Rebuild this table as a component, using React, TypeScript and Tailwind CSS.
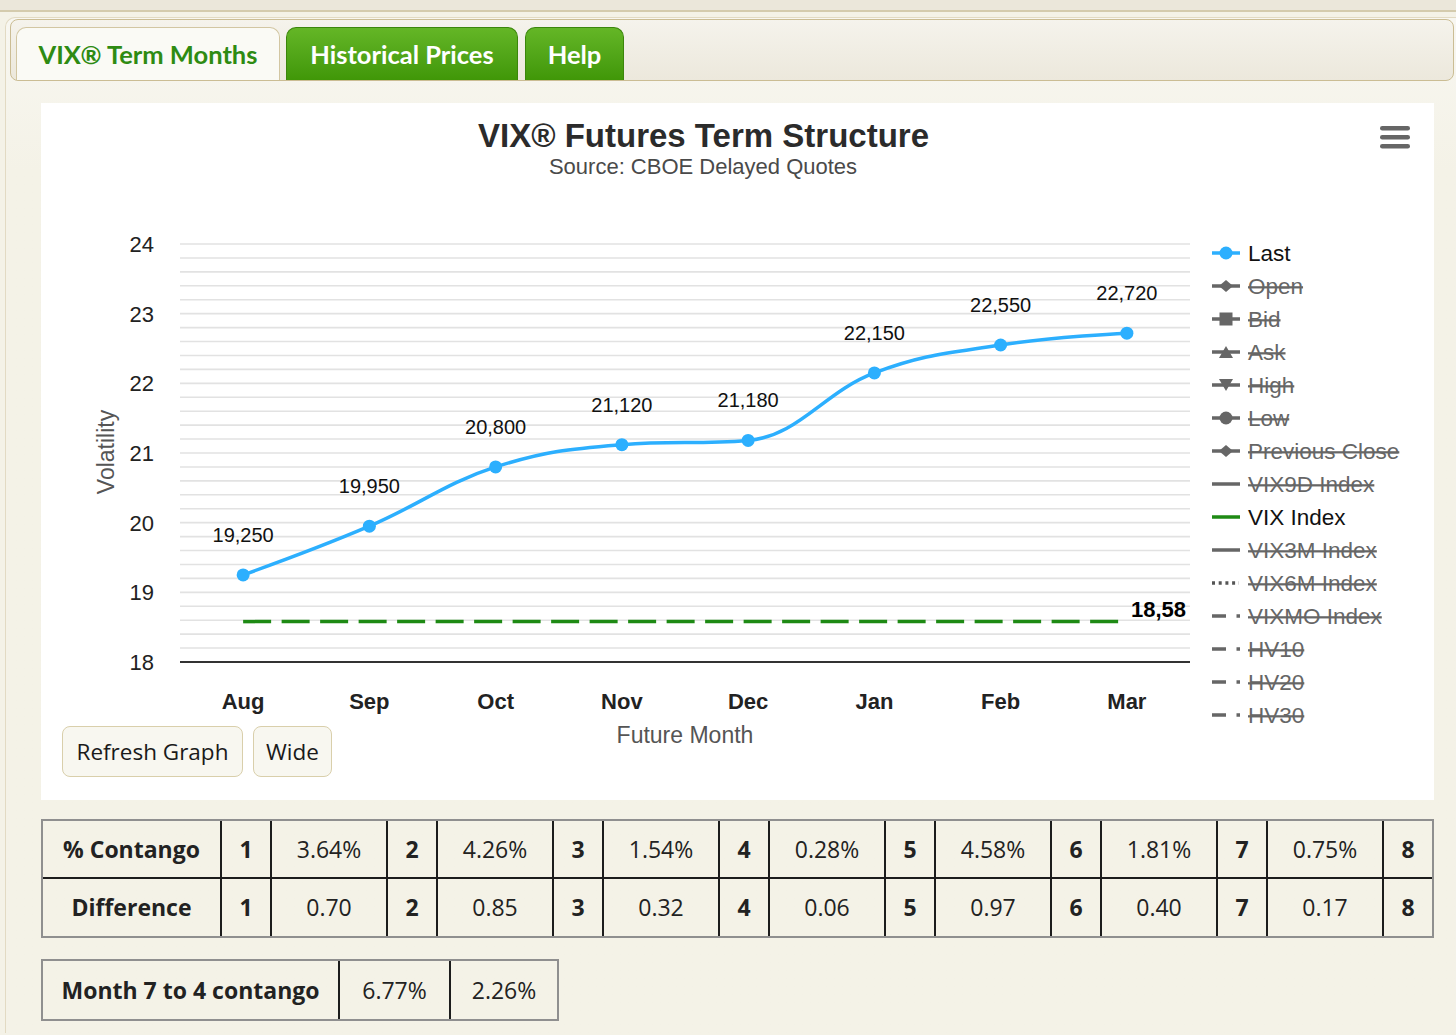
import React from 'react';

const cats = ['Aug', 'Sep', 'Oct', 'Nov', 'Dec', 'Jan', 'Feb', 'Mar'];
const vals = [19.25, 19.95, 20.8, 21.12, 21.18, 22.15, 22.55, 22.72];
const dl = ['19,250', '19,950', '20,800', '21,120', '21,180', '22,150', '22,550', '22,720'];
const X0 = 180;
const X1 = 1190;
const Y0 = 662;
const Y1 = 244;
const step = (X1 - X0) / 8;
const px = (i: number) => X0 + step * (i + 0.5);
const py = (v: number) => Y0 - ((v - 18) * (Y0 - Y1)) / 6;

function spline(pts: [number, number][]) {
  const n = pts.length;
  const rc: ([number, number] | null)[] = new Array(n).fill(null);
  let d = `M${pts[0][0]},${pts[0][1]}`;
  for (let i = 1; i < n; i++) {
    const [x, y] = pts[i];
    const [lx, ly] = pts[i - 1];
    let lcx = x;
    let lcy = y;
    if (i < n - 1) {
      const [nx, ny] = pts[i + 1];
      const s = 1.5;
      const den = 2.5;
      lcx = (s * x + lx) / den;
      lcy = (s * y + ly) / den;
      const rcx = (s * x + nx) / den;
      let rcy = (s * y + ny) / den;
      const corr = ((rcy - lcy) * (rcx - x)) / (rcx - lcx) + y - rcy;
      lcy += corr;
      rcy += corr;
      if (lcy > ly && lcy > y) {
        lcy = Math.max(ly, y);
        rcy = 2 * y - lcy;
      } else if (lcy < ly && lcy < y) {
        lcy = Math.min(ly, y);
        rcy = 2 * y - lcy;
      }
      if (rcy > ny && rcy > y) {
        rcy = Math.max(ny, y);
        lcy = 2 * y - rcy;
      } else if (rcy < ny && rcy < y) {
        rcy = Math.min(ny, y);
        lcy = 2 * y - rcy;
      }
      rc[i] = [rcx, rcy];
    }
    const prev = rc[i - 1] ?? pts[i - 1];
    d += ` C${prev[0]},${prev[1]} ${lcx},${lcy} ${x},${y}`;
  }
  return d;
}

type Leg = { name: string; kind: string; on?: boolean };
const legend: Leg[] = [
  { name: 'Last', kind: 'blue', on: true },
  { name: 'Open', kind: 'diamond' },
  { name: 'Bid', kind: 'square' },
  { name: 'Ask', kind: 'up' },
  { name: 'High', kind: 'down' },
  { name: 'Low', kind: 'circle' },
  { name: 'Previous Close', kind: 'diamond' },
  { name: 'VIX9D Index', kind: 'solid' },
  { name: 'VIX Index', kind: 'green', on: true },
  { name: 'VIX3M Index', kind: 'solid' },
  { name: 'VIX6M Index', kind: 'dot' },
  { name: 'VIXMO Index', kind: 'dashdot' },
  { name: 'HV10', kind: 'dashdot' },
  { name: 'HV20', kind: 'dashdot' },
  { name: 'HV30', kind: 'dashdot' },
];

function Symbol({ kind, y }: { kind: string; y: number }) {
  const g = '#666666';
  const cx = 1226;
  const line = (color: string, dash?: string, x2 = 1240) => (
    <line x1={1212} x2={x2} y1={y} y2={y} stroke={color} strokeWidth={3.5} strokeDasharray={dash} />
  );
  switch (kind) {
    case 'blue':
      return (
        <g>
          {line('#2caffe')}
          <circle cx={cx} cy={y} r={6.5} fill="#2caffe" />
        </g>
      );
    case 'diamond':
      return (
        <g>
          {line(g, undefined)}
          <path d={`M${cx - 7},${y} L${cx},${y - 6} L${cx + 7},${y} L${cx},${y + 6} Z`} fill={g} />
        </g>
      );
    case 'square':
      return (
        <g>
          {line(g)}
          <rect x={cx - 6.5} y={y - 6.5} width={13} height={13} fill={g} />
        </g>
      );
    case 'up':
      return (
        <g>
          {line(g)}
          <path d={`M${cx - 7},${y + 6} L${cx},${y - 6} L${cx + 7},${y + 6} Z`} fill={g} />
        </g>
      );
    case 'down':
      return (
        <g>
          {line(g)}
          <path d={`M${cx - 7},${y - 6} L${cx},${y + 6} L${cx + 7},${y - 6} Z`} fill={g} />
        </g>
      );
    case 'circle':
      return (
        <g>
          {line(g)}
          <circle cx={cx} cy={y} r={6.5} fill={g} />
        </g>
      );
    case 'green':
      return line('#1e8a14');
    case 'dot':
      return line('#555555', '3 3.7', 1239);
    case 'dashdot':
      return line('#666666', '14 10.5 3.5 10.5', 1240);
    default:
      return line(g);
  }
}

function Chart() {
  const pts: [number, number][] = vals.map((v, i) => [px(i), py(v)]);
  const grid: number[] = [];
  for (let k = 0; k < 30; k++) grid.push(Y1 + ((Y0 - Y1) * k) / 30);
  const font = '"Liberation Sans", Arial, Helvetica, sans-serif';
  const vixY = py(18.58);
  return (
    <svg width={1393} height={697} viewBox="41 103 1393 697" className="block" style={{ fontFamily: font }}>
      <rect x={41} y={103} width={1393} height={697} fill="#ffffff" />
      <text x={703.5} y={147} textAnchor="middle" fontSize={33} fontWeight={700} fill="#2b2b2b">
        VIX® Futures Term Structure
      </text>
      <text x={703} y={174} textAnchor="middle" fontSize={22} fill="#4a4a4a">
        Source: CBOE Delayed Quotes
      </text>
      {/* hamburger */}
      <rect x={1380} y={126} width={30} height={4.5} rx={2.25} fill="#666666" />
      <rect x={1380} y={135} width={30} height={4.5} rx={2.25} fill="#666666" />
      <rect x={1380} y={144} width={30} height={4.5} rx={2.25} fill="#666666" />
      {/* grid */}
      {grid.map((gy, i) => (
        <line key={i} x1={X0} x2={X1} y1={gy} y2={gy} stroke="#e2e2e2" strokeWidth={1.6} />
      ))}
      <line x1={X0} x2={X1} y1={Y0} y2={Y0} stroke="#333333" strokeWidth={2} />
      {[18, 19, 20, 21, 22, 23, 24].map((v) => (
        <text key={v} x={154} y={py(v) + 8} textAnchor="end" fontSize={22} fill="#222222">
          {v}
        </text>
      ))}
      <text
        x={114}
        y={452}
        transform="rotate(-90 114 452)"
        textAnchor="middle"
        fontSize={23}
        fill="#555555"
      >
        Volatility
      </text>
      {cats.map((c, i) => (
        <text key={c} x={px(i)} y={709} textAnchor="middle" fontSize={22} fontWeight={700} fill="#222222">
          {c}
        </text>
      ))}
      <text x={685} y={743} textAnchor="middle" fontSize={23} fill="#555555">
        Future Month
      </text>
      {/* VIX index dashed */}
      <line
        x1={px(0)}
        x2={px(7)}
        y1={vixY}
        y2={vixY}
        stroke="#1e8a14"
        strokeWidth={3.5}
        strokeDasharray="28 10.5"
      />
      <text x={1131} y={617} fontSize={22} fontWeight={700} fill="#000000">
        18,58
      </text>
      {/* spline */}
      <path d={spline(pts)} fill="none" stroke="#2caffe" strokeWidth={3.5} strokeLinejoin="round" strokeLinecap="round" />
      {pts.map(([x, y], i) => (
        <circle key={i} cx={x} cy={y} r={6.5} fill="#2caffe" />
      ))}
      {pts.map(([x, y], i) => (
        <text key={`l${i}`} x={x} y={y - 33} textAnchor="middle" fontSize={20} fill="#111111">
          {dl[i]}
        </text>
      ))}
      {/* legend */}
      {legend.map((it, i) => {
        const y = 253 + 33 * i;
        return (
          <g key={it.name}>
            <Symbol kind={it.kind} y={y} />
            <text
              x={1248}
              y={y + 8}
              fontSize={22.5}
              fill={it.on ? '#111111' : '#666666'}
              style={it.on ? undefined : { textDecoration: 'line-through' }}
            >
              {it.name}
            </text>
          </g>
        );
      })}
    </svg>
  );
}

const contango = ['3.64%', '4.26%', '1.54%', '0.28%', '4.58%', '1.81%', '0.75%'];
const diff = ['0.70', '0.85', '0.32', '0.06', '0.97', '0.40', '0.17'];

function Row({ label, data, last }: { label: string; data: string[]; last?: boolean }) {
  return (
    <div className={`flex ${last ? 'h-[57px]' : 'h-[58px] border-b-2 border-[#1c1c1c]'}`}>
      <div className="w-[177px] flex items-center justify-center font-bold">{label}</div>
      {data.map((d, i) => (
        <React.Fragment key={i}>
          <div className="w-[50px] border-l-2 border-[#1c1c1c] flex items-center justify-center font-bold">{i + 1}</div>
          <div className="w-[116px] border-l-2 border-[#1c1c1c] flex items-center justify-center">{d}</div>
        </React.Fragment>
      ))}
      <div className="w-[50px] border-l-2 border-[#1c1c1c] flex items-center justify-center font-bold">8</div>
    </div>
  );
}

const openSans = { fontFamily: '"Open Sans", "Noto Sans", sans-serif' };

export default function App() {
  return (
    <div className="w-[1456px] h-[1035px] overflow-hidden bg-[#f4f2e7] text-[#222]" style={{ fontFamily: 'Lato, "Open Sans", sans-serif' }}>
      <div className="h-[12px] bg-[#ebe7da] border-b-2 border-[#d4cbad]" />
      <div className="mt-[5px] ml-[5px] border-l border-t border-[#e2dac3] rounded-tl-[10px] pt-[1px] pl-[4px] pr-[2px] bg-linear-to-b from-[#f8f7f1] to-[#f4f2e7] to-[15%] h-[1016px]">
        <div className="h-[62px] rounded-[8px] border border-[#cbbd94] bg-linear-to-b from-[#f5f3ec] to-[#ece8dc] flex items-end pl-[5px]">
          <div className="w-[264px] h-[53px] rounded-t-[10px] border border-b-0 border-[#d2c6a2] bg-[#fafaf5] flex items-center justify-center text-[25.5px] font-bold text-[#2e8b12]">
            VIX® Term Months
          </div>
          <div className="ml-[6px] w-[232px] h-[53px] rounded-t-[10px] border border-b-0 border-[#3b860b] bg-linear-to-b from-[#64b626] to-[#409707] flex items-center justify-center text-[25.5px] font-bold text-white">
            Historical Prices
          </div>
          <div className="ml-[7px] w-[99px] h-[53px] rounded-t-[10px] border border-b-0 border-[#3b860b] bg-linear-to-b from-[#64b626] to-[#409707] flex items-center justify-center text-[25.5px] font-bold text-white">
            Help
          </div>
        </div>
        <div className="mt-[22px] ml-[31px] w-[1393px] h-[697px] bg-white relative">
          <Chart />
          <div className="absolute left-[21px] top-[623px] flex gap-[10px]" style={openSans}>
            <div className="h-[51px] w-[181px] rounded-[8px] border-[1.5px] border-[#d9cfab] bg-[#f8f7f0] flex items-center justify-center text-[22.5px] text-[#1a1a1a]">
              Refresh Graph
            </div>
            <div className="h-[51px] w-[79px] rounded-[8px] border-[1.5px] border-[#d9cfab] bg-[#f8f7f0] flex items-center justify-center text-[22.5px] text-[#1a1a1a]">
              Wide
            </div>
          </div>
        </div>
        <div className="mt-[19px] ml-[31px] w-[1393px] border-2 border-[#8f8f8f] text-[23px]" style={openSans}>
          <Row label="% Contango" data={contango} />
          <Row label="Difference" data={diff} last />
        </div>
        <div className="mt-[21px] ml-[31px] w-[518px] h-[62px] border-2 border-[#8f8f8f] text-[23px] flex" style={openSans}>
          <div className="w-[295px] flex items-center justify-center font-bold">Month 7 to 4 contango</div>
          <div className="w-[111px] border-l-2 border-[#1c1c1c] flex items-center justify-center">6.77%</div>
          <div className="w-[108px] border-l-2 border-[#1c1c1c] flex items-center justify-center">2.26%</div>
        </div>
      </div>
    </div>
  );
}
